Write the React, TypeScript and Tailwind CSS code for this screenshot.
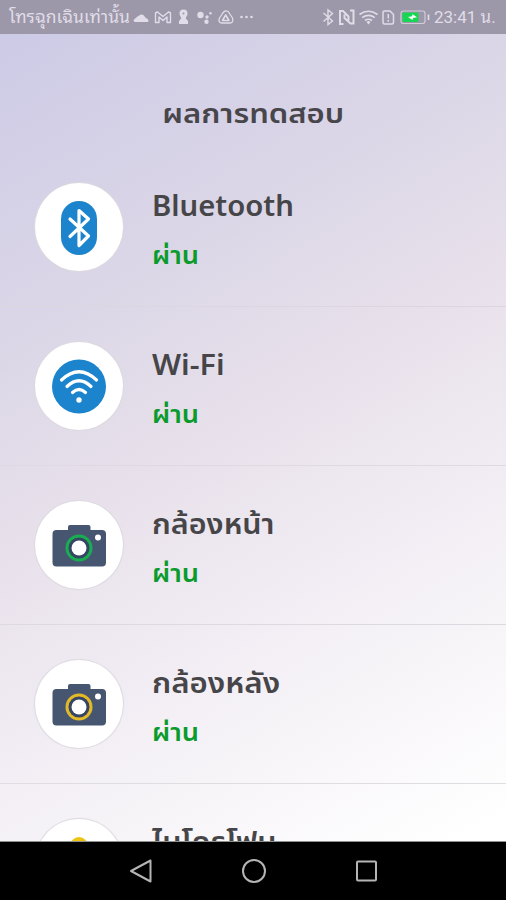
import React from "react";

const BluetoothIcon = () => (
  <svg width="88" height="88" viewBox="0 0 88 88" fill="none">
    <rect x="26" y="18" width="36" height="54" rx="18" fill="#1b84cc" />
    <path
      d="M35 36L53.5 53L44 62.500V27.5L53.5 36L35 53.500"
      stroke="#fff"
      strokeWidth="3.2"
      strokeLinecap="round"
      strokeLinejoin="round"
    />
  </svg>
);

const WifiIcon = () => (
  <svg width="88" height="88" viewBox="0 0 88 88" fill="none">
    <circle cx="44" cy="44.500" r="27" fill="#1b84cc" />
    <g stroke="#fff" strokeWidth="3.2" strokeLinecap="round">
      <path d="M26.500 38Q44 21.500 61.500 38" />
      <path d="M32 44.500Q44 33 56 44.500" />
      <path d="M37.500 50.500Q44 44.500 50.500 50.500" />
    </g>
    <circle cx="44" cy="58" r="2.700" fill="#fff" />
  </svg>
);

const CameraIcon = ({ ring }: { ring: string }) => (
  <svg width="88" height="88" viewBox="0 0 88 88" fill="none">
    <path
      d="M35 24h18.500a2 2 0 0 1 2 2v3H67a4 4 0 0 1 4 4v28.500a4 4 0 0 1-4 4H21.500a4 4 0 0 1-4-4V33a4 4 0 0 1 4-4H33v-3a2 2 0 0 1 2-2z"
      fill="#475670"
    />
    <circle cx="44" cy="47" r="13.500" fill={ring} />
    <circle cx="44" cy="47" r="10.500" fill="#354562" />
    <circle cx="44" cy="47" r="7.500" fill="#fff" />
    <circle cx="63" cy="36.500" r="3" fill="#fff" />
  </svg>
);

const MicrophoneIcon = () => (
  <svg width="88" height="88" viewBox="0 0 88 88" fill="none">
    <rect x="35" y="18" width="18" height="34" rx="9" fill="#edc414" />
    <path d="M29 42v4a15 15 0 0 0 30 0v-4M44 61v9M35 70h18" stroke="#475670" strokeWidth="3" />
  </svg>
);

const StatusBar = () => (
  <div className="flex h-[34px] shrink-0 items-center justify-between bg-[#9c97a9] pl-[9px] pr-[10px] text-[#e0dde8]">
    <div className="flex items-center">
      <span className="w-[124px] whitespace-nowrap text-[17.5px] leading-[36px]">โทรฉุกเฉินเท่านั้น</span>
      <svg width="122" height="20" viewBox="0 0 122 20" fill="none">
        <path d="M2 15a1.500 1.500 0 0 1-1-2.500l3.500-3a3 3 0 0 1 1.500-.8 3.500 3.500 0 0 1 5.500.5l.8 1.300q2.700.8 3.200 3a1.300 1.300 0 0 1-1.500 1.500z" fill="currentColor" />
        <g stroke="currentColor" strokeLinejoin="round">
          <path d="M22.500 15.500V6l2-1 5.500 4.500L35.500 5l2 1v9.500H34V10l-4 3.500L26 10v5.500z" strokeWidth="1.400" />
          <path d="M92.500 4c2-.6 3.300 1 4 2.500l3 4.500c1 3.500-.5 5-2.500 5h-8c-2.500 0-4-2-2.500-5l3-4.500c.8-1 1.500-2.500 3-2.500z" strokeWidth="1.300" />
          <path d="M92.700 8l3.300 5.500h-6.500z" strokeWidth="1.600" />
        </g>
        <circle cx="50.500" cy="6.500" r="4" fill="currentColor" />
        <path d="M47.500 8.500h6l-.7 3 2.200 2.500v3h-9v-3l2.200-2.500z" fill="currentColor" />
        <circle cx="50.500" cy="6.500" r="1" fill="#9c97a9" />
        <g fill="currentColor">
          <circle cx="67.500" cy="8" r="3.200" />
          <circle cx="74" cy="10" r="1.700" />
          <circle cx="77.500" cy="6.200" r="1.200" />
          <circle cx="73.500" cy="14.800" r="2.200" />
          <circle cx="108.500" cy="10" r="1.300" />
          <circle cx="113.500" cy="10" r="1.300" />
          <circle cx="118.500" cy="10" r="1.300" />
        </g>
      </svg>
    </div>
    <div className="flex items-center">
      <svg className="mr-[4px]" width="110" height="20" viewBox="0 0 110 20" fill="none" stroke="currentColor">
        <path d="M3.500 6l9 8-4.500 3.500V3L12.500 6.500l-9 8" strokeWidth="1.400" />
        <path d="M23.500 17h-3.500V4h3l5.500 5.500v4M30 3.500h3.500v13h-3l-6-5.500V7.500" strokeWidth="2" />
        <g strokeWidth="1.700">
          <path d="M39.500 7.500Q48.500 1 57.500 7.500" />
          <path d="M42.200 10.600Q48.500 6 54.800 10.600" />
          <path d="M45 13.500Q48.500 11 52 13.500" />
        </g>
        <path d="M46.500 15l2-1.200 2 1.200-2 2.500z" fill="currentColor" stroke="none" />
        <path d="M63 5.500q0-1.500 1.500-1.500H70l3.500 3.500v8q0 1.500-1.500 1.500h-7.500q-1.500 0-1.500-1.500z" strokeWidth="1.500" />
        <path d="M68.300 7v4.500M68.300 13v1.800" strokeWidth="1.500" />
        <rect x="81" y="4" width="24" height="12.500" rx="2.500" strokeWidth="1.200" strokeOpacity=".75" />
        <rect x="82.500" y="5.500" width="16" height="9.500" rx="1" fill="#17d653" stroke="none" />
        <path d="M88 10l4-.7.500-2 4.500 2.900-4 .7-.5 2z" fill="#fff" stroke="none" />
        <path d="M108.500 7.500v5.500" strokeWidth="1.700" />
      </svg>
      <span className="w-[62px] whitespace-nowrap text-[17px] leading-[36px]">23:41 น.</span>
    </div>
  </div>
);

const tests = [
  { name: "Bluetooth", icon: <BluetoothIcon />, stretch: "scale-x-[1.045]", line: "border-[#dcd7de]" },
  { name: "Wi-Fi", icon: <WifiIcon />, stretch: "scale-x-[1.09]", line: "border-[#dfdae2]" },
  { name: "กล้องหน้า", icon: <CameraIcon ring="#19ac51" />, stretch: "scale-x-[1.09]", line: "border-[#dcd9e0]" },
  { name: "กล้องหลัง", icon: <CameraIcon ring="#e3b927" />, stretch: "scale-x-[1.115]", line: "border-[#dfdde2]" },
  { name: "ไมโครโฟน", icon: <MicrophoneIcon />, stretch: "scale-x-[1.09]", line: "border-transparent" },
];

const NavBar = () => (
  <div className="flex h-[58px] shrink-0 items-center justify-center gap-[88px] bg-black pl-px text-[#b5b5b5]">
    <svg width="24" height="26" viewBox="0 0 24 26" fill="none" stroke="currentColor" strokeWidth="2" strokeLinejoin="round">
      <path d="M21.500 2.500v21L2 13z" />
    </svg>
    <svg width="26" height="26" viewBox="0 0 26 26" fill="none" stroke="currentColor" strokeWidth="2">
      <circle cx="13" cy="13" r="11" />
    </svg>
    <svg width="24" height="24" viewBox="0 0 24 24" fill="none" stroke="currentColor" strokeWidth="2">
      <rect x="2" y="2.500" width="19" height="19" rx="1" />
    </svg>
  </div>
);

export default function App() {
  return (
    <div className="flex h-[900px] w-[506px] flex-col overflow-hidden font-['Roboto','Noto_Sans_Thai_Looped','Noto_Looped_Thai','Loma','Noto_Serif_Thai',sans-serif]">
      <StatusBar />
      <main className="flex min-h-0 flex-1 flex-col overflow-hidden border-b border-[#8f918f] bg-[linear-gradient(150deg,#cdcae6_0%,#dcd7e7_30%,#e9e2ec_50%,#f3eff5_70%,#ffffff_98%)] font-['Noto_Sans','Noto_Sans_Thai',sans-serif]">
        <h1 className="flex h-[114px] shrink-0 items-center justify-center pt-[44px] text-[27px] font-semibold text-[#48464b]">
          <span className="inline-block scale-x-[1.15]">ผลการทดสอบ</span>
        </h1>
        {tests.map((test) => (
          <div key={test.name} className={`flex h-[159px] shrink-0 items-start border-b pl-[35px] pt-[35px] ${test.line}`}>
            <div className="h-[88px] w-[88px] shrink-0 rounded-full bg-white shadow-[0_0_1px_1px_#dcd9df]">{test.icon}</div>
            <div className="pl-[29px]">
              <div className={`h-[46px] origin-left whitespace-nowrap text-[28px] font-semibold leading-[44px] text-[#464548] ${test.stretch}`}>
                {test.name}
              </div>
              <div className="h-[50px] origin-left scale-x-[1.09] whitespace-nowrap text-[25px] font-semibold leading-[50px] text-[#0b9b2d]">ผ่าน</div>
            </div>
          </div>
        ))}
      </main>
      <NavBar />
    </div>
  );
}
